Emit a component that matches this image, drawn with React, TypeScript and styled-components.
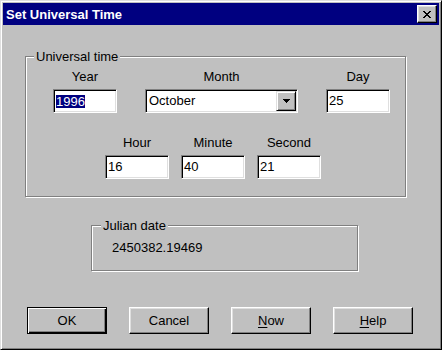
import styled, { createGlobalStyle } from "styled-components";

const GlobalStyle = createGlobalStyle`
  html, body {
    margin: 0;
    padding: 0;
    background: #c0c0c0;
  }
  body {
    font-family: "Liberation Sans", Arial, sans-serif;
    font-size: 13px;
    color: #000;
  }
`;

const Window = styled.div`
  width: 442px;
  height: 350px;
  box-sizing: border-box;
  background: #c0c0c0;
  border: 1px solid;
  border-color: #dfdfdf #000 #000 #dfdfdf;
  box-shadow: inset 1px 1px #fff, inset -1px -1px #808080;
  padding: 2px;
  display: flex;
  flex-direction: column;
`;

const TitleBar = styled.div`
  height: 22px;
  background: #000080;
  color: #fff;
  display: flex;
  align-items: center;
  justify-content: space-between;
  padding-left: 3px;
  padding-right: 2px;
  .caption {
    font-weight: 700;
    font-size: 13px;
    line-height: 15px;
  }
`;

const CloseButton = styled.div`
  width: 20px;
  height: 18px;
  box-sizing: border-box;
  background: #c0c0c0;
  border: 1px solid;
  border-color: #fff #000 #000 #fff;
  box-shadow: inset -1px -1px #808080, inset 1px 1px #dfdfdf;
  display: flex;
  align-items: center;
  justify-content: center;
  svg {
    display: block;
  }
`;

const Body = styled.div`
  display: flex;
  flex-direction: column;
  align-items: flex-start;
`;

const Group = styled.div<{ $left: number; $top: number; $width: number; $height: number }>`
  position: relative;
  box-sizing: border-box;
  margin-left: ${(p) => p.$left}px;
  margin-top: ${(p) => p.$top}px;
  width: ${(p) => p.$width}px;
  height: ${(p) => p.$height}px;
  border: 1px solid #808080;
  box-shadow: 1px 1px 0 #fff, inset 1px 1px 0 #fff;
`;

const Legend = styled.span<{ $left: number }>`
  position: absolute;
  top: -8px;
  left: ${(p) => p.$left}px;
  padding: 0 2px;
  line-height: 15px;
  background: #c0c0c0;
  white-space: nowrap;
`;

const Row = styled.div<{ $indent: number; $gap: number; $top: number }>`
  display: flex;
  gap: ${(p) => p.$gap}px;
  padding-left: ${(p) => p.$indent}px;
  margin-top: ${(p) => p.$top}px;
`;

const Field = styled.div<{ $width: number }>`
  width: ${(p) => p.$width}px;
  display: flex;
  flex-direction: column;
  align-items: center;
  gap: 5px;
  label {
    line-height: 15px;
    white-space: nowrap;
  }
`;

const sunken = `
  box-sizing: border-box;
  border: 1px solid;
  border-color: #808080 #fff #fff #808080;
  box-shadow: inset 1px 1px #000, inset -1px -1px #dfdfdf;
  background: #fff;
`;

const Edit = styled.div`
  ${sunken}
  width: 100%;
  height: 24px;
  padding: 0 1px 0 2px;
  line-height: 22px;
  white-space: nowrap;
  .sel {
    display: inline-block;
    background: #000080;
    color: #fff;
    line-height: 13px;
    vertical-align: middle;
  }
`;

const Combo = styled.div`
  ${sunken}
  width: 100%;
  height: 24px;
  padding: 1px 1px 1px 2px;
  display: flex;
  align-items: stretch;
  .value {
    flex: 1;
    line-height: 20px;
    padding-left: 1px;
  }
`;

const DropButton = styled.div`
  width: 20px;
  box-sizing: border-box;
  background: #c0c0c0;
  border: 1px solid;
  border-color: #dfdfdf #000 #000 #dfdfdf;
  box-shadow: inset 1px 1px #fff, inset -1px -1px #808080;
  display: flex;
  align-items: center;
  justify-content: center;
  svg {
    display: block;
  }
`;

const JulianValue = styled.div`
  padding: 14px 0 0 20px;
  line-height: 15px;
`;

const ButtonRow = styled.div`
  display: flex;
  gap: 22px;
  margin-top: 36px;
  margin-left: 24px;
`;

const Button = styled.button<{ $default?: boolean }>`
  width: 80px;
  height: 27px;
  box-sizing: border-box;
  padding: 0;
  font-family: inherit;
  font-size: 13px;
  color: #000;
  background: #c0c0c0;
  border: 1px solid;
  border-color: ${(p) => (p.$default ? "#000" : "#fff #000 #000 #fff")};
  box-shadow: ${(p) =>
    p.$default
      ? "inset 1px 1px #fff, inset -1px -1px #000, inset -2px -2px #808080"
      : "inset -1px -1px #808080, inset 1px 1px #dfdfdf"};
  u {
    text-decoration-thickness: 1px;
    text-underline-offset: 2px;
  }
`;

const CloseGlyph = () => (
  <svg width="8" height="7" viewBox="0 0 8 7" shapeRendering="crispEdges">
    <path
      fill="#000"
      d="M0 0h2v1H0zM6 0h2v1H6zM1 1h2v1H1zM5 1h2v1H5zM2 2h4v1H2zM3 3h2v1H3zM2 4h4v1H2zM1 5h2v1H1zM5 5h2v1H5zM0 6h2v1H0zM6 6h2v1H6z"
    />
  </svg>
);

const DownArrow = () => (
  <svg width="7" height="4" viewBox="0 0 7 4" shapeRendering="crispEdges">
    <path fill="#000" d="M0 0h7v1H0zM1 1h5v1H1zM2 2h3v1H2zM3 3h1v1H3z" />
  </svg>
);

export default function App() {
  return (
    <>
      <GlobalStyle />
      <Window>
        <TitleBar>
          <span className="caption">Set Universal Time</span>
          <CloseButton>
            <CloseGlyph />
          </CloseButton>
        </TitleBar>
        <Body>
          <Group $left={22} $top={31} $width={381} $height={141}>
            <Legend $left={8}>Universal time</Legend>
            <Row $indent={27} $gap={28} $top={12}>
              <Field $width={64}>
                <label>Year</label>
                <Edit>
                  <span className="sel">1996</span>
                </Edit>
              </Field>
              <Field $width={153}>
                <label>Month</label>
                <Combo>
                  <span className="value">October</span>
                  <DropButton>
                    <DownArrow />
                  </DropButton>
                </Combo>
              </Field>
              <Field $width={64}>
                <label>Day</label>
                <Edit>25</Edit>
              </Field>
            </Row>
            <Row $indent={79} $gap={12} $top={22}>
              <Field $width={64}>
                <label>Hour</label>
                <Edit>16</Edit>
              </Field>
              <Field $width={64}>
                <label>Minute</label>
                <Edit>40</Edit>
              </Field>
              <Field $width={64}>
                <label>Second</label>
                <Edit>21</Edit>
              </Field>
            </Row>
          </Group>
          <Group $left={88} $top={28} $width={267} $height={46}>
            <Legend $left={9}>Julian date</Legend>
            <JulianValue>2450382.19469</JulianValue>
          </Group>
          <ButtonRow>
            <Button $default>OK</Button>
            <Button>Cancel</Button>
            <Button>
              <u>N</u>ow
            </Button>
            <Button>
              <u>H</u>elp
            </Button>
          </ButtonRow>
        </Body>
      </Window>
    </>
  );
}
